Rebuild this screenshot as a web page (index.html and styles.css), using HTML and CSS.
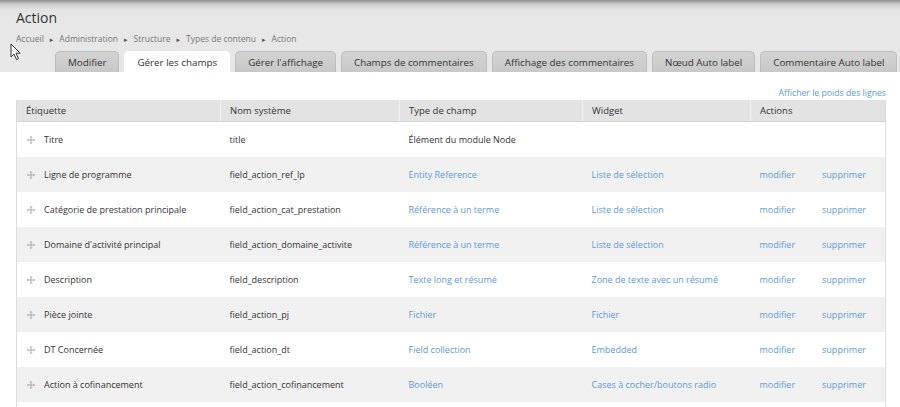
FILE: index.html
```html
<!DOCTYPE html>
<html lang="fr">
<head>
<meta charset="utf-8">
<title>Action</title>
<link rel="stylesheet" href="styles.css">
</head>
<body>
<div class="branding">
  <h1 class="title">Action</h1>
  <nav class="breadcrumb">
    <a href="#">Accueil</a><span class="sep">▸</span><a href="#">Administration</a><span class="sep">▸</span><a href="#">Structure</a><span class="sep">▸</span><a href="#">Types de contenu</a><span class="sep">▸</span><a href="#">Action</a>
  </nav>
  <ul class="tabs">
    <li class="tab">Modifier</li>
    <li class="tab active">Gérer les champs</li>
    <li class="tab">Gérer l'affichage</li>
    <li class="tab">Champs de commentaires</li>
    <li class="tab">Affichage des commentaires</li>
    <li class="tab">Nœud Auto label</li>
    <li class="tab">Commentaire Auto label</li>
  </ul>
  <svg class="cursor" width="12" height="18" viewBox="0 0 12 18"><path d="M1 1 L1 14 L4 11 L6.5 16.5 L8.5 15.6 L6 10.2 L10.2 10.2 Z" fill="#fff" stroke="#333" stroke-width="1"/></svg>
</div>
<div class="content">
  <div class="weight-toggle"><a href="#">Afficher le poids des lignes</a></div>
  <table class="fields">
    <thead>
      <tr><th class="c1">Étiquette</th><th class="c2">Nom système</th><th class="c3">Type de champ</th><th class="c4">Widget</th><th class="c5">Actions</th></tr>
    </thead>
    <tbody>
      <tr><td><svg class="handle" viewBox="0 0 9 9"><path d="M4.5 0.5V8.5M0.5 4.5H8.5M3.3 1.7L4.5 0.5L5.7 1.7M3.3 7.3L4.5 8.5L5.7 7.3M1.7 3.3L0.5 4.5L1.7 5.7M7.3 3.3L8.5 4.5L7.3 5.7"/></svg>Titre</td><td>title</td><td>Élément du module Node</td><td></td><td></td></tr>
      <tr><td><svg class="handle" viewBox="0 0 9 9"><path d="M4.5 0.5V8.5M0.5 4.5H8.5M3.3 1.7L4.5 0.5L5.7 1.7M3.3 7.3L4.5 8.5L5.7 7.3M1.7 3.3L0.5 4.5L1.7 5.7M7.3 3.3L8.5 4.5L7.3 5.7"/></svg>Ligne de programme</td><td>field_action_ref_lp</td><td><a href="#">Entity Reference</a></td><td><a href="#">Liste de sélection</a></td><td class="acts"><a href="#">modifier</a><a href="#">supprimer</a></td></tr>
      <tr><td><svg class="handle" viewBox="0 0 9 9"><path d="M4.5 0.5V8.5M0.5 4.5H8.5M3.3 1.7L4.5 0.5L5.7 1.7M3.3 7.3L4.5 8.5L5.7 7.3M1.7 3.3L0.5 4.5L1.7 5.7M7.3 3.3L8.5 4.5L7.3 5.7"/></svg>Catégorie de prestation principale</td><td>field_action_cat_prestation</td><td><a href="#">Référence à un terme</a></td><td><a href="#">Liste de sélection</a></td><td class="acts"><a href="#">modifier</a><a href="#">supprimer</a></td></tr>
      <tr><td><svg class="handle" viewBox="0 0 9 9"><path d="M4.5 0.5V8.5M0.5 4.5H8.5M3.3 1.7L4.5 0.5L5.7 1.7M3.3 7.3L4.5 8.5L5.7 7.3M1.7 3.3L0.5 4.5L1.7 5.7M7.3 3.3L8.5 4.5L7.3 5.7"/></svg>Domaine d'activité principal</td><td>field_action_domaine_activite</td><td><a href="#">Référence à un terme</a></td><td><a href="#">Liste de sélection</a></td><td class="acts"><a href="#">modifier</a><a href="#">supprimer</a></td></tr>
      <tr><td><svg class="handle" viewBox="0 0 9 9"><path d="M4.5 0.5V8.5M0.5 4.5H8.5M3.3 1.7L4.5 0.5L5.7 1.7M3.3 7.3L4.5 8.5L5.7 7.3M1.7 3.3L0.5 4.5L1.7 5.7M7.3 3.3L8.5 4.5L7.3 5.7"/></svg>Description</td><td>field_description</td><td><a href="#">Texte long et résumé</a></td><td><a href="#">Zone de texte avec un résumé</a></td><td class="acts"><a href="#">modifier</a><a href="#">supprimer</a></td></tr>
      <tr><td><svg class="handle" viewBox="0 0 9 9"><path d="M4.5 0.5V8.5M0.5 4.5H8.5M3.3 1.7L4.5 0.5L5.7 1.7M3.3 7.3L4.5 8.5L5.7 7.3M1.7 3.3L0.5 4.5L1.7 5.7M7.3 3.3L8.5 4.5L7.3 5.7"/></svg>Pièce jointe</td><td>field_action_pj</td><td><a href="#">Fichier</a></td><td><a href="#">Fichier</a></td><td class="acts"><a href="#">modifier</a><a href="#">supprimer</a></td></tr>
      <tr><td><svg class="handle" viewBox="0 0 9 9"><path d="M4.5 0.5V8.5M0.5 4.5H8.5M3.3 1.7L4.5 0.5L5.7 1.7M3.3 7.3L4.5 8.5L5.7 7.3M1.7 3.3L0.5 4.5L1.7 5.7M7.3 3.3L8.5 4.5L7.3 5.7"/></svg>DT Concernée</td><td>field_action_dt</td><td><a href="#">Field collection</a></td><td><a href="#">Embedded</a></td><td class="acts"><a href="#">modifier</a><a href="#">supprimer</a></td></tr>
      <tr><td><svg class="handle" viewBox="0 0 9 9"><path d="M4.5 0.5V8.5M0.5 4.5H8.5M3.3 1.7L4.5 0.5L5.7 1.7M3.3 7.3L4.5 8.5L5.7 7.3M1.7 3.3L0.5 4.5L1.7 5.7M7.3 3.3L8.5 4.5L7.3 5.7"/></svg>Action à cofinancement</td><td>field_action_cofinancement</td><td><a href="#">Booléen</a></td><td><a href="#">Cases à cocher/boutons radio</a></td><td class="acts"><a href="#">modifier</a><a href="#">supprimer</a></td></tr>
      <tr><td>&nbsp;</td><td></td><td></td><td></td><td></td></tr>
    </tbody>
  </table>
</div>
</body>
</html>
```
FILE: styles.css
```css
html, body {
  margin: 0;
  padding: 0;
  background: #fff;
  font-family: "Open Sans", "DejaVu Sans", sans-serif;
  color: #333;
  overflow: hidden;
}
a { color: #5c9bd4; text-decoration: none; }

.branding {
  position: relative;
  background: linear-gradient(to bottom, #8f8f8f 0px, #c9c9c9 4px, #e2e2e2 9px, #e7e7e7 16px, #e7e7e7 100%);
  padding: 9px 16px 0 16px;
}
.title {
  margin: 0;
  font-size: 14px;
  font-weight: 400;
  line-height: 18px;
  color: #333;
}
.breadcrumb {
  margin-top: 6px;
  font-size: 8.5px;
  line-height: 12px;
  color: #777;
}
.breadcrumb a { color: #777; }
.breadcrumb .sep { font-size: 7px; margin: 0 6px; color: #555; }

.tabs {
  list-style: none;
  margin: 5px 0 0 39px;
  padding: 0;
  display: flex;
  gap: 5px;
  height: 21px;
}
.tab {
  flex: none;
  white-space: nowrap;
  font-size: 9.8px;
  line-height: 21px;
  padding: 0 12px;
  background: linear-gradient(to bottom, #d3d3d3, #c8c8c8);
  border: 1px solid #bdbdbd;
  border-bottom: none;
  border-radius: 5px 5px 0 0;
  color: #333;
  box-sizing: border-box;
}
.tab.active {
  background: #fff;
  border-color: #fff;
}
.cursor {
  position: absolute;
  left: 10px;
  top: 43px;
}

.content {
  padding: 15px 14px 0 16px;
}
.weight-toggle {
  text-align: right;
  font-size: 8.7px;
  line-height: 12px;
  height: 13px;
}
.fields {
  width: 870px;
  border-collapse: collapse;
  table-layout: fixed;
  font-size: 9px;
  border-left: 1px solid #dcdcdc;
  border-right: 1px solid #dcdcdc;
}
.fields th {
  background: #e3e3e3;
  font-weight: 400;
  text-align: left;
  height: 21px;
  padding: 0 9px;
  font-size: 9.5px;
  border-left: 1px solid #f2f2f2;
  border-bottom: 1px solid #d6d6d6;
  color: #333;
}
.fields th.c1 { width: 185px; border-left: none; }
.fields th.c2 { width: 160px; }
.fields th.c3 { width: 164px; }
.fields th.c4 { width: 149px; }
.fields td {
  height: 35px;
  padding: 0 9px;
  white-space: nowrap;
  overflow: hidden;
}
.fields tbody tr:nth-child(even) td { background: #f1f1f1; }
.handle {
  display: inline-block;
  width: 8px;
  height: 8px;
  margin: 0 9px 0 1px;
  vertical-align: -1px;
  fill: none;
  stroke: #a0a0a0;
  stroke-width: 0.9;
}
.acts a + a { margin-left: 27px; }
```
